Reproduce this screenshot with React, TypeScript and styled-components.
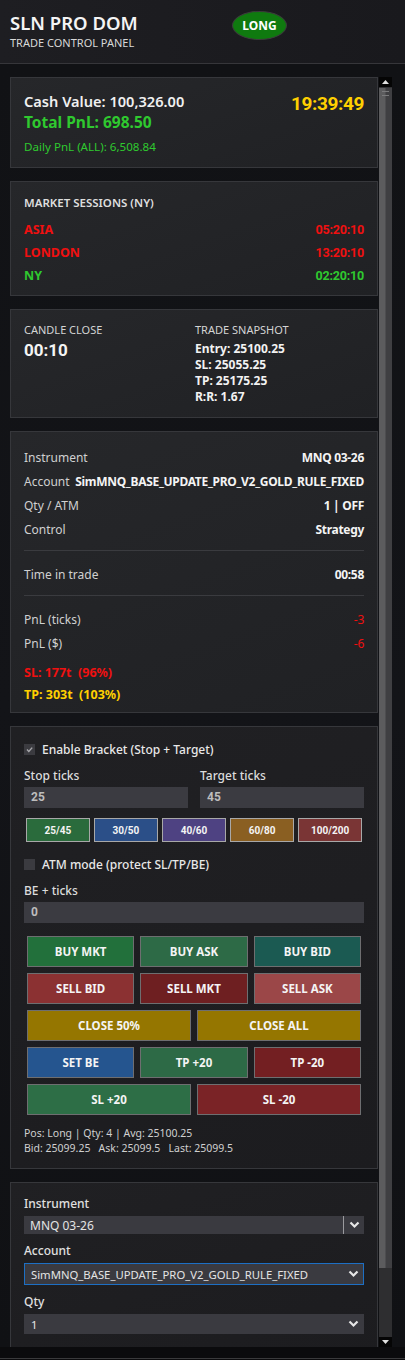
import React from 'react';
import styled, { createGlobalStyle } from 'styled-components';

type Tone = 'red' | 'green' | 'white';

const toneColors: Record<Tone, string> = {
  red: '#f01010',
  green: '#2fc92f',
  white: '#f2f2f2',
};

const sessions = [
  { name: 'ASIA', time: '05:20:10', tone: 'red' as Tone },
  { name: 'LONDON', time: '13:20:10', tone: 'red' as Tone },
  { name: 'NY', time: '02:20:10', tone: 'green' as Tone },
];

const infoRows = [
  { label: 'Instrument', value: 'MNQ 03-26' },
  { label: 'Account', value: 'SimMNQ_BASE_UPDATE_PRO_V2_GOLD_RULE_FIXED' },
  { label: 'Qty / ATM', value: '1 | OFF' },
  { label: 'Control', value: 'Strategy' },
];

const presets = [
  { label: '25/45', bg: '#2a6b3c' },
  { label: '30/50', bg: '#2b4f88' },
  { label: '40/60', bg: '#4e4282' },
  { label: '60/80', bg: '#8a5f22' },
  { label: '100/200', bg: '#7a3535' },
];

const orderRows = [
  [
    { label: 'BUY MKT', bg: '#22703b' },
    { label: 'BUY ASK', bg: '#2d6a46' },
    { label: 'BUY BID', bg: '#1b5a52' },
  ],
  [
    { label: 'SELL BID', bg: '#8b3132' },
    { label: 'SELL MKT', bg: '#6e1f21' },
    { label: 'SELL ASK', bg: '#9b4748' },
  ],
  [
    { label: 'CLOSE 50%', bg: '#957600' },
    { label: 'CLOSE ALL', bg: '#957600' },
  ],
  [
    { label: 'SET BE', bg: '#25558f' },
    { label: 'TP +20', bg: '#2d6a46' },
    { label: 'TP -20', bg: '#731f22' },
  ],
  [
    { label: 'SL +20', bg: '#2d6e46' },
    { label: 'SL -20', bg: '#7a2326' },
  ],
];

const Chevron = () => (
  <svg width="11" height="8" viewBox="0 0 11 8">
    <path d="M1.5 1.5 L5.5 5.5 L9.5 1.5" fill="none" stroke="#e6e6e6" strokeWidth="2.2" />
  </svg>
);

const Check = () => (
  <svg width="11" height="11" viewBox="0 0 11 11">
    <path d="M3 5.6 L4.8 7.4 L8.2 3.6" fill="none" stroke="#a8a8ac" strokeWidth="1.4" />
  </svg>
);

export default function App(): JSX.Element {
  return (
    <>
      <GlobalStyle />
      <Page>
        <Header>
          <TitleBlock>
            <Title>SLN PRO DOM</Title>
            <Subtitle>TRADE CONTROL PANEL</Subtitle>
          </TitleBlock>
          <StatusPill>LONG</StatusPill>
        </Header>

        <ScrollRow>
          <Content>
            <Card pad="13px 13px 12px">
              <TopRow>
                <div>
                  <CashValue>Cash Value: 100,326.00</CashValue>
                  <TotalPnl>Total PnL: 698.50</TotalPnl>
                  <DailyPnl>Daily PnL (ALL): 6,508.84</DailyPnl>
                </div>
                <Clock>19:39:49</Clock>
              </TopRow>
            </Card>

            <Card pad="13px 13px 8px">
              <SectionTitle>MARKET SESSIONS (NY)</SectionTitle>
              {sessions.map((s) => (
                <SessionRow key={s.name} tone={s.tone}>
                  <span>{s.name}</span>
                  <SessionTime>{s.time}</SessionTime>
                </SessionRow>
              ))}
            </Card>

            <Card pad="13px 13px 12px">
              <SnapshotGrid>
                <div>
                  <SmallCaps>CANDLE CLOSE</SmallCaps>
                  <Countdown>00:10</Countdown>
                </div>
                <div>
                  <SmallCaps>TRADE SNAPSHOT</SmallCaps>
                  <SnapList>
                    <SnapLine>Entry: 25100.25</SnapLine>
                    <SnapLine>SL: 25055.25</SnapLine>
                    <SnapLine>TP: 25175.25</SnapLine>
                    <SnapLine>R:R: 1.67</SnapLine>
                  </SnapList>
                </div>
              </SnapshotGrid>
            </Card>

            <Card pad="13px 13px 6px">
              {infoRows.map((r) => (
                <InfoRow key={r.label}>
                  <InfoLabel>{r.label}</InfoLabel>
                  <InfoValue>{r.value}</InfoValue>
                </InfoRow>
              ))}
              <Divider />
              <InfoRow>
                <InfoLabel>Time in trade</InfoLabel>
                <InfoValue>00:58</InfoValue>
              </InfoRow>
              <Divider />
              <InfoRow>
                <InfoLabel>PnL (ticks)</InfoLabel>
                <InfoValue tone="red">-3</InfoValue>
              </InfoRow>
              <InfoRow>
                <InfoLabel>PnL ($)</InfoLabel>
                <InfoValue tone="red">-6</InfoValue>
              </InfoRow>
              <Distance color="#f01010" first>
                SL: 177t&nbsp; (96%)
              </Distance>
              <Distance color="#ffd000">TP: 303t&nbsp; (103%)</Distance>
            </Card>

            <Card dark pad="13px 13px 12px">
              <CheckRow>
                <CheckBox>
                  <Check />
                </CheckBox>
                <span>Enable Bracket (Stop + Target)</span>
              </CheckRow>
              <FieldPair>
                <div>
                  <FieldLabel>Stop ticks</FieldLabel>
                  <NumberBox>25</NumberBox>
                </div>
                <div>
                  <FieldLabel>Target ticks</FieldLabel>
                  <NumberBox>45</NumberBox>
                </div>
              </FieldPair>
              <PresetGrid>
                {presets.map((p) => (
                  <PresetButton key={p.label} bg={p.bg}>
                    {p.label}
                  </PresetButton>
                ))}
              </PresetGrid>
              <CheckRow spaced>
                <CheckBox />
                <span>ATM mode (protect SL/TP/BE)</span>
              </CheckRow>
              <FieldLabel spaced>BE + ticks</FieldLabel>
              <NumberBox>0</NumberBox>
              <OrderGrid>
                {orderRows.map((row, i) => (
                  <OrderRow key={i} cols={row.length}>
                    {row.map((b) => (
                      <OrderButton key={b.label} bg={b.bg}>
                        {b.label}
                      </OrderButton>
                    ))}
                  </OrderRow>
                ))}
              </OrderGrid>
              <StatusText>
                <div>Pos: Long | Qty: 4 | Avg: 25100.25</div>
                <div>Bid: 25099.25&nbsp;&nbsp; Ask: 25099.5&nbsp;&nbsp; Last: 25099.5</div>
              </StatusText>
            </Card>

            <Card dark pad="13px 13px 11px">
              <SelectLabel first>Instrument</SelectLabel>
              <Combo>
                <span>MNQ 03-26</span>
                <ComboButton>
                  <Chevron />
                </ComboButton>
              </Combo>
              <SelectLabel>Account</SelectLabel>
              <Select focused>
                <span>SimMNQ_BASE_UPDATE_PRO_V2_GOLD_RULE_FIXED</span>
                <Chevron />
              </Select>
              <SelectLabel>Qty</SelectLabel>
              <Select>
                <span>1</span>
                <Chevron />
              </Select>
              <Spacer />
            </Card>
          </Content>

          <ScrollBar>
            <ArrowButton>
              <svg width="7" height="4" viewBox="0 0 7 4">
                <path d="M0 4 L3.5 0 L7 4 Z" fill="#e0e0e0" />
              </svg>
            </ArrowButton>
            <Thumb>
              <Grip />
            </Thumb>
            <Track />
            <ArrowButton>
              <svg width="7" height="4" viewBox="0 0 7 4">
                <path d="M0 0 L3.5 4 L7 0 Z" fill="#e0e0e0" />
              </svg>
            </ArrowButton>
          </ScrollBar>
        </ScrollRow>
        <Footer />
      </Page>
    </>
  );
}

const GlobalStyle = createGlobalStyle`
  html, body {
    margin: 0;
    padding: 0;
    background: #0b0b0d;
  }
  body {
    font-family: 'Noto Sans', 'Open Sans', sans-serif;
    color: #e6e6e6;
  }
  * {
    box-sizing: border-box;
  }
`;

const Page = styled.div`
  width: 405px;
  height: 1360px;
  display: flex;
  flex-direction: column;
  background: #0b0b0d;
  overflow: hidden;
`;

const Header = styled.div`
  height: 64px;
  flex: none;
  display: flex;
  align-items: flex-start;
  padding: 0 10px;
  background: linear-gradient(90deg, #1e1e22 0%, #19191d 100%);
  border-bottom: 1px solid #36363a;
`;

const TitleBlock = styled.div`
  padding-top: 11px;
  width: 222px;
`;

const Title = styled.div`
  font-size: 18.5px;
  font-weight: 600;
  line-height: 24px;
  color: #f4f4f4;
`;

const Subtitle = styled.div`
  font-size: 11px;
  line-height: 14px;
  margin-top: 1px;
  color: #d8d8d8;
`;

const StatusPill = styled.div`
  margin-top: 11px;
  width: 55px;
  height: 29px;
  border-radius: 50%;
  background: #0f7a0f;
  border: 1px solid #3b3b3b;
  color: #ffffff;
  font-size: 12px;
  font-weight: 700;
  display: flex;
  align-items: center;
  justify-content: center;
`;

const ScrollRow = styled.div`
  height: 1283px;
  flex: none;
  display: flex;
  padding: 13px 0 0 10px;
  background: linear-gradient(180deg, #111215 0%, #131418 50%, #101114 100%);
  overflow: hidden;
`;

const Content = styled.div`
  width: 368px;
  display: flex;
  flex-direction: column;
  gap: 13px;
`;

const Card = styled.div<{ dark?: boolean; pad: string }>`
  flex: none;
  border: 1px solid #36373b;
  background: ${(p) =>
    p.dark ? 'linear-gradient(160deg, #202023 0%, #1c1c1f 100%)' : 'linear-gradient(160deg, #26272a 0%, #202124 100%)'};
  padding: ${(p) => p.pad};
`;

const TopRow = styled.div`
  display: flex;
  justify-content: space-between;
  align-items: flex-start;
`;

const CashValue = styled.div`
  font-size: 14.6px;
  font-weight: 600;
  line-height: 21px;
  color: #f0f0f0;
`;

const TotalPnl = styled.div`
  font-size: 15.5px;
  font-weight: 700;
  line-height: 21px;
  color: #2fc92f;
`;

const DailyPnl = styled.div`
  margin-top: 6px;
  font-size: 11.6px;
  line-height: 16px;
  color: #2fc92f;
`;

const Clock = styled.div`
  font-family: Roboto, 'Noto Sans', sans-serif;
  font-size: 19px;
  font-weight: 700;
  line-height: 22px;
  letter-spacing: -0.4px;
  color: #ffd000;
  margin-top: 2px;
`;

const SectionTitle = styled.div`
  font-size: 11.5px;
  font-weight: 600;
  line-height: 16px;
  color: #dedede;
  margin-bottom: 7px;
`;

const SessionRow = styled.div<{ tone: Tone }>`
  display: flex;
  justify-content: space-between;
  font-size: 12.5px;
  font-weight: 700;
  line-height: 23px;
  color: ${(p) => toneColors[p.tone]};
`;

const SessionTime = styled.span`
  font-family: Roboto, 'Noto Sans', sans-serif;
  font-size: 12.5px;
  letter-spacing: -0.2px;
`;

const SnapshotGrid = styled.div`
  display: grid;
  grid-template-columns: 171px 1fr;
`;

const SmallCaps = styled.div`
  font-size: 11px;
  line-height: 14px;
  color: #d4d4d4;
`;

const Countdown = styled.div`
  margin-top: 3px;
  font-family: Roboto, 'Noto Sans', sans-serif;
  font-size: 17px;
  font-weight: 700;
  line-height: 20px;
  color: #f4f4f4;
`;

const SnapList = styled.div`
  margin-top: 4px;
`;

const SnapLine = styled.div`
  font-size: 12px;
  font-weight: 700;
  line-height: 16px;
  color: #f2f2f2;
`;

const InfoRow = styled.div`
  display: flex;
  justify-content: space-between;
  align-items: center;
  gap: 3px;
  height: 24px;
  white-space: nowrap;
`;

const InfoLabel = styled.span`
  font-size: 12px;
  color: #d0d0d0;
`;

const InfoValue = styled.span<{ tone?: Tone }>`
  font-size: 12px;
  font-weight: ${(p) => (p.tone ? 400 : 700)};
  color: ${(p) => (p.tone ? toneColors[p.tone] : '#f4f4f4')};
  letter-spacing: -0.3px;
`;

const Divider = styled.div`
  height: 1px;
  background: #3a3b3f;
  margin: 9px 0 11px;
`;

const Distance = styled.div<{ color: string; first?: boolean }>`
  margin-top: ${(p) => (p.first ? '7px' : '0')};
  font-size: 12.5px;
  font-weight: 700;
  line-height: 22px;
  color: ${(p) => p.color};
`;

const CheckRow = styled.div<{ spaced?: boolean }>`
  display: flex;
  align-items: center;
  gap: 7px;
  height: 18px;
  margin-top: ${(p) => (p.spaced ? '13px' : '0')};
  font-size: 12px;
  font-weight: 500;
  color: #e8e8e8;
`;

const CheckBox = styled.div`
  width: 11px;
  height: 11px;
  background: #3b3b40;
  display: flex;
  align-items: center;
  justify-content: center;
`;

const FieldPair = styled.div`
  display: grid;
  grid-template-columns: 1fr 1fr;
  gap: 12px;
  margin-top: 10px;
`;

const FieldLabel = styled.div<{ spaced?: boolean }>`
  font-size: 12px;
  font-weight: 500;
  line-height: 16px;
  color: #dcdcdc;
  margin-top: ${(p) => (p.spaced ? '10px' : '0')};
  margin-bottom: 3px;
`;

const NumberBox = styled.div`
  height: 21px;
  background: #3b3b41;
  padding-left: 7px;
  font-family: Roboto, 'Noto Sans', sans-serif;
  font-size: 12px;
  font-weight: 700;
  line-height: 21px;
  color: #bdbdbd;
`;

const PresetGrid = styled.div`
  display: grid;
  grid-template-columns: repeat(5, 1fr);
  gap: 4.5px;
  margin: 10px 2px 0;
`;

const PresetButton = styled.div<{ bg: string }>`
  height: 24px;
  background: ${(p) => p.bg};
  border: 1px solid #a8a8a8;
  display: flex;
  align-items: center;
  justify-content: center;
  font-family: Roboto, 'Noto Sans', sans-serif;
  font-size: 10px;
  font-weight: 700;
  color: #f4f4f4;
`;

const OrderGrid = styled.div`
  display: flex;
  flex-direction: column;
  gap: 6px;
  margin: 13px 3px 0;
`;

const OrderRow = styled.div<{ cols: number }>`
  display: grid;
  grid-template-columns: repeat(${(p) => p.cols}, 1fr);
  gap: 6px;
`;

const OrderButton = styled.div<{ bg: string }>`
  height: 31px;
  background: ${(p) => p.bg};
  border: 1px solid #6e6e70;
  display: flex;
  align-items: center;
  justify-content: center;
  font-size: 11.5px;
  font-weight: 700;
  color: #f4f4f4;
`;

const StatusText = styled.div`
  margin-top: 11px;
  font-size: 10.5px;
  line-height: 15px;
  color: #d0d0d0;
  white-space: nowrap;
`;

const SelectLabel = styled.div<{ first?: boolean }>`
  font-size: 12px;
  font-weight: 500;
  line-height: 16px;
  color: #e0e0e0;
  margin-top: ${(p) => (p.first ? '0' : '9px')};
  margin-bottom: 4px;
`;

const Combo = styled.div`
  height: 18px;
  background: #3a3a40;
  display: flex;
  align-items: center;
  padding-left: 6px;
  font-size: 12px;
  color: #e4e4e4;
  span {
    flex: 1;
  }
`;

const ComboButton = styled.div`
  width: 21px;
  height: 18px;
  border-left: 1px solid #9a9a9e;
  display: flex;
  align-items: center;
  justify-content: center;
`;

const Select = styled.div<{ focused?: boolean }>`
  height: ${(p) => (p.focused ? '22px' : '20px')};
  background: #3a3a40;
  border: 1px solid ${(p) => (p.focused ? '#1d6fc4' : '#3a3a40')};
  display: flex;
  align-items: center;
  justify-content: space-between;
  padding: 0 4px 0 6px;
  font-size: 11.3px;
  color: #e4e4e4;
  white-space: nowrap;
`;

const Spacer = styled.div`
  height: 20px;
`;

const ScrollBar = styled.div`
  width: 13px;
  margin-left: 1px;
  display: flex;
  flex-direction: column;
  background: #303033;
`;

const ArrowButton = styled.div`
  height: 10px;
  flex: none;
  background: #050505;
  display: flex;
  align-items: center;
  justify-content: center;
`;

const Thumb = styled.div`
  height: 1180px;
  flex: none;
  margin-top: 1px;
  position: relative;
  background: linear-gradient(90deg, #5c5c5e 0%, #5c5c5e 45%, #3f3f42 55%, #3f3f42 100%);
`;

const Grip = styled.div`
  position: absolute;
  top: 3px;
  left: 3px;
  width: 7px;
  height: 5px;
  border-top: 1px solid #7a7a7c;
  border-bottom: 1px solid #7a7a7c;
`;

const Track = styled.div`
  flex: 1;
  background: #2e2e30;
`;

const Footer = styled.div`
  height: 12px;
  flex: none;
  border-bottom: 1px solid #3a3a3c;
  background: #0b0b0d;
`;
